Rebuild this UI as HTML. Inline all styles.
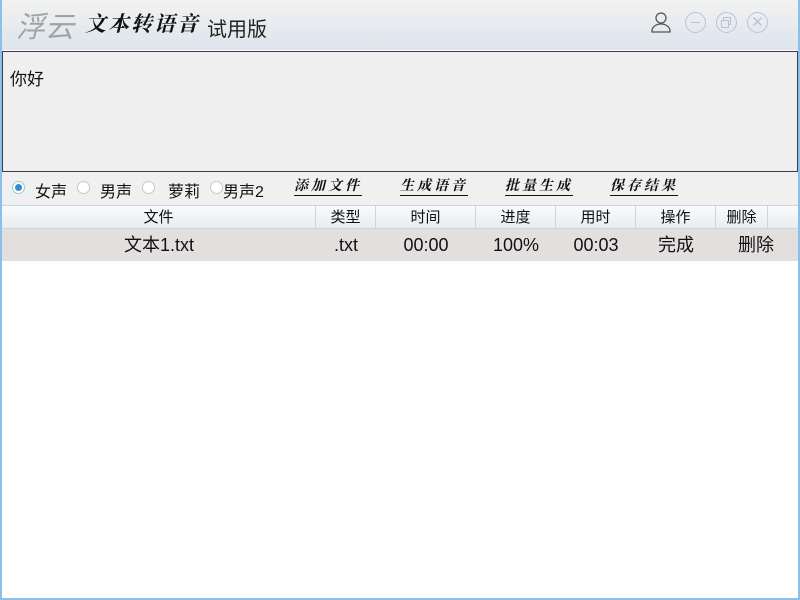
<!DOCTYPE html>
<html><head><meta charset="utf-8"><style>
*{margin:0;padding:0;box-sizing:border-box}
body{width:800px;height:600px;overflow:hidden;font-family:"Liberation Sans","Noto Sans CJK SC",sans-serif;background:#fff;position:relative}
.win{position:absolute;left:0;top:0;width:800px;height:600px;border:2px solid #8cc0e8;border-top:none}
.title{position:absolute;left:0;top:0;width:800px;height:50px;background:linear-gradient(#f2f2f2,#dde4ec)}
.t{position:absolute;white-space:nowrap}
.edit{position:absolute;left:2px;top:51px;width:796px;height:121px;border:1px solid #3c3c4c;background:#efefef;font-size:17px;padding:13px 7px;color:#111}
.tool{position:absolute;left:2px;top:172px;width:796px;height:33px;background:#f0f0f0;font-size:16px;color:#111}
.rad{position:absolute;top:9px;width:13px;height:13px;border-radius:50%;border:1px solid #c8c8c8;background:#fff}
.btn{position:absolute;top:7px;font-family:"Liberation Serif","Noto Serif CJK SC",serif;font-weight:bold;font-style:italic;font-size:14px;letter-spacing:3px;border-bottom:1.5px solid #111;line-height:16px}
.hdr{position:absolute;left:2px;top:205px;width:796px;height:24px;background:linear-gradient(#fafbfc,#e8ecf1);border-bottom:1px solid #c8d4e0;border-top:1px solid #c8d8e8}
.row{position:absolute;left:2px;top:229px;width:796px;height:32px;background:#e3dfdf}
.c{position:absolute;top:0;text-align:center;color:#111}
.hdr .c{line-height:23px;font-size:15px;border-right:1px solid #cdd6df;height:23px}
.row .c{line-height:32px;font-size:18px}
.ic{position:absolute;top:12px;width:21px;height:21px;border-radius:50%;border:1px solid #b8c4d6}
</style></head><body>
<div class="title">
<div class="t" style="left:16px;top:4px;font-size:29px;color:#9ea4a6;font-style:italic">浮云</div>
<div class="t" style="left:85px;top:8px;font-size:21px;font-weight:bold;font-style:italic;font-family:'Noto Serif CJK SC',serif;color:#111;letter-spacing:2px">文本转语音</div>
<div class="t" style="left:207px;top:13px;font-size:20px;color:#222">试用版</div>
<svg style="position:absolute;left:650px;top:11px" width="22" height="22" viewBox="0 0 22 22" fill="none" stroke="#555" stroke-width="1.3"><circle cx="11" cy="7" r="5"/><path d="M2 21v-1c0-4 4-7 9-7s9 3 9 7v1z"/></svg>
<div class="ic" style="left:685px"><div style="position:absolute;left:5px;top:9px;width:9px;height:1px;background:#b8c4d6"></div></div>
<div class="ic" style="left:716px"><div style="position:absolute;left:6px;top:4px;width:8px;height:8px;border:1px solid #b8c4d6"></div><div style="position:absolute;left:4px;top:7px;width:8px;height:8px;border:1px solid #b8c4d6;background:#e6ebf0"></div></div>
<div class="ic" style="left:747px;color:#b8c4d6;font-size:15px;line-height:19px;text-align:center">✕</div>
</div>
<div class="edit">你好</div>
<div class="tool">
<div class="rad" style="left:10px;border-color:#9cc"><div style="margin:2px;width:7px;height:7px;border-radius:50%;background:#3a8ad0"></div></div>
<div class="t" style="left:33px;top:6px">女声</div>
<div class="rad" style="left:75px"></div><div class="t" style="left:98px;top:6px">男声</div>
<div class="rad" style="left:140px"></div><div class="t" style="left:166px;top:6px">萝莉</div>
<div class="rad" style="left:208px"></div><div class="t" style="left:221px;top:6px">男声2</div>
<div class="btn" style="left:292px">添加文件</div>
<div class="btn" style="left:398px">生成语音</div>
<div class="btn" style="left:503px">批量生成</div>
<div class="btn" style="left:608px">保存结果</div>
</div>
<div class="hdr">
<div class="c" style="left:0;width:314px">文件</div>
<div class="c" style="left:314px;width:60px">类型</div>
<div class="c" style="left:374px;width:100px">时间</div>
<div class="c" style="left:474px;width:80px">进度</div>
<div class="c" style="left:554px;width:80px">用时</div>
<div class="c" style="left:634px;width:80px">操作</div>
<div class="c" style="left:714px;width:52px">删除</div>
</div>
<div class="row">
<div class="c" style="left:0;width:314px">文本1.txt</div>
<div class="c" style="left:314px;width:60px">.txt</div>
<div class="c" style="left:374px;width:100px">00:00</div>
<div class="c" style="left:474px;width:80px">100%</div>
<div class="c" style="left:554px;width:80px">00:03</div>
<div class="c" style="left:634px;width:80px">完成</div>
<div class="c" style="left:714px;width:80px">删除</div>
</div>
<div class="win"></div>
</body></html>
